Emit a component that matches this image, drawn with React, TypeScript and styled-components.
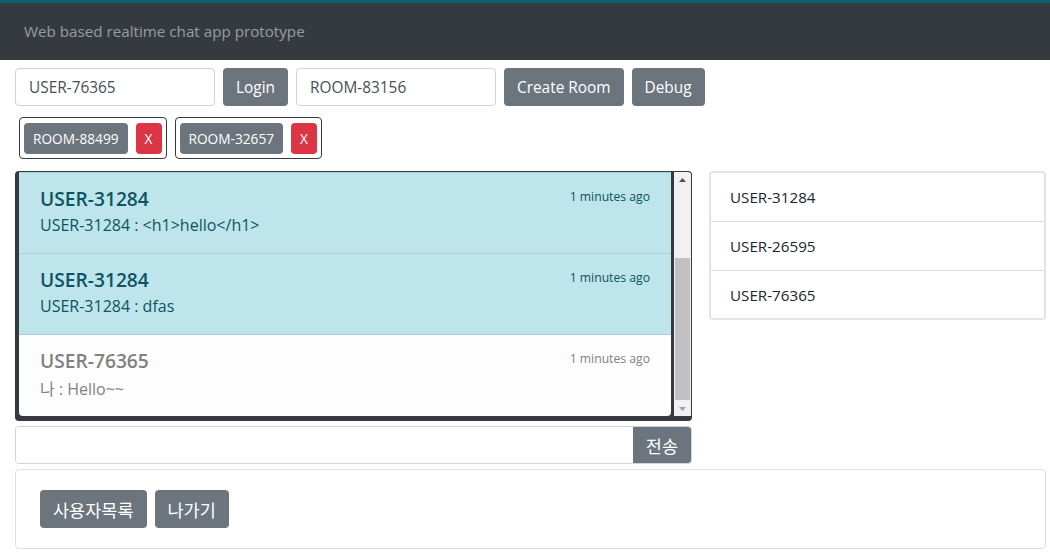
import React from "react";
import styled, { createGlobalStyle, css } from "styled-components";

const GlobalStyle = createGlobalStyle`
  html, body { margin: 0; padding: 0; background: #fff; }
  body {
    font-family: "Segoe UI", "Open Sans", "Noto Sans", "Noto Sans CJK KR", sans-serif;
    font-size: 16px;
    color: #212529;
  }
  * { box-sizing: border-box; }
`;

const Page = styled.div`
  width: 1050px;
  height: 552px;
  overflow: hidden;
`;

const Navbar = styled.header`
  height: 60px;
  background: #343a40;
  border-top: 3px solid #0b5f6e;
  display: flex;
  align-items: center;
  padding: 0 24px 1px;
  color: rgba(255, 255, 255, 0.5);
  font-size: 15.2px;
`;

const Content = styled.main`
  padding: 8px 4px 0 15px;
  display: flex;
  flex-direction: column;
`;

const Toolbar = styled.div`
  display: flex;
  gap: 8px;
  height: 38px;
`;

const TextInput = styled.input`
  width: 200px;
  height: 38px;
  border: 1px solid #ced4da;
  border-radius: 4px;
  padding: 6px 13px;
  font: inherit;
  font-size: 15.4px;
  color: #495057;
  outline: none;
`;

const Button = styled.button<{ $variant?: "secondary" | "danger"; $size?: "sm" | "md" }>`
  border: none;
  border-radius: 4px;
  font-family: inherit;
  color: #fff;
  background: ${(p) => (p.$variant === "danger" ? "#dc3545" : "#6c757d")};
  cursor: pointer;
  white-space: nowrap;
  display: inline-flex;
  align-items: center;
  justify-content: center;
  ${(p) =>
    p.$size === "sm"
      ? css`
          height: 31px;
          padding: 0 9px;
          font-size: 13.7px;
        `
      : css`
          height: 38px;
          padding: 0 13px;
          font-size: 15.4px;
        `}
`;

const KoreanButton = styled(Button)`
  font-size: 17.5px;
  font-family: "Noto Sans CJK KR", sans-serif;
`;

const RoomTags = styled.div`
  display: flex;
  gap: 8px;
  margin: 11px 0 0 4px;
  height: 42px;
`;

const RoomTag = styled.div`
  display: flex;
  align-items: center;
  gap: 8px;
  padding: 0 4px;
  border: 1px solid #343a40;
  border-radius: 4px;
`;

const MainGrid = styled.div`
  display: grid;
  grid-template-columns: 677px 337px;
  column-gap: 17px;
  margin-top: 12px;
  align-items: start;
`;

const ChatColumn = styled.div`
  display: flex;
  flex-direction: column;
  gap: 5px;
`;

const ChatFrame = styled.div`
  height: 250px;
  display: flex;
  gap: 3px;
  background: #343a40;
  border-style: solid;
  border-color: #343a40;
  border-width: 1px 1px 5px 4px;
  border-radius: 4px;
  overflow: hidden;
`;

const Viewport = styled.div`
  flex: 1;
  overflow: hidden;
  display: flex;
  flex-direction: column;
  justify-content: flex-end;
  border-radius: 0 0 4px 4px;
`;

const MessageList = styled.ul`
  list-style: none;
  margin: 0;
  padding: 0;
`;

const MessageItem = styled.li<{ $mine?: boolean }>`
  height: 81px;
  padding: 14px 21px 0 21px;
  background: ${(p) => (p.$mine ? "#fdfdfe" : "#bee5eb")};
  color: ${(p) => (p.$mine ? "#818182" : "#0c5460")};
  border-bottom: 1px solid ${(p) => (p.$mine ? "#dcdcdc" : "#abcdd3")};
  &:last-child { border-bottom: none; }
`;

const MessageHead = styled.div`
  display: flex;
  justify-content: space-between;
  align-items: flex-start;
`;

const Author = styled.h5`
  margin: 0;
  font-size: 19.2px;
  font-weight: 600;
  line-height: 1.3;
`;

const Time = styled.small`
  font-size: 12.2px;
  margin-top: 1px;
`;

const MessageText = styled.p`
  margin: 2px 0 0;
  font-size: 16px;
`;

const Scrollbar = styled.div`
  width: 17px;
  flex: none;
  background: #f1f1f1;
  display: flex;
  flex-direction: column;
`;

const ScrollArrow = styled.div`
  height: 15px;
  display: flex;
  align-items: center;
  justify-content: center;
  flex: none;
`;

const ScrollTrack = styled.div`
  flex: 1;
  display: flex;
  flex-direction: column;
  justify-content: flex-end;
  padding: 0 1px 1px;
`;

const ScrollThumb = styled.div`
  background: #c1c1c1;
  height: 142px;
`;

const SendBar = styled.div`
  display: flex;
  height: 38px;
  border: 1px solid #ced4da;
  border-radius: 4px;
  overflow: hidden;
`;

const SendInput = styled.input`
  flex: 1;
  border: none;
  outline: none;
  font: inherit;
  padding: 0 12px;
`;

const SendButton = styled(KoreanButton)`
  border-radius: 0;
  height: 100%;
  padding: 0 13px;
`;

const UserList = styled.ul`
  list-style: none;
  margin: 0;
  padding: 0;
  border: 2px solid #e4e4e4;
  border-radius: 4px;
`;

const UserItem = styled.li`
  height: 49px;
  display: flex;
  align-items: center;
  padding: 0 19px;
  font-size: 15.2px;
  color: #212529;
  border-bottom: 1px solid #dcdcdc;
  &:last-child { border-bottom: none; height: 47px; }
`;

const Card = styled.section`
  margin-top: 5px;
  height: 80px;
  border: 1px solid #dfdfdf;
  border-radius: 4px;
  display: flex;
  align-items: center;
  gap: 8px;
  padding: 0 24px;
`;

const messages = [
  { author: "USER-31284", text: "USER-31284 : hi", mine: false },
  { author: "USER-31284", text: "USER-31284 : <h1>hello</h1>", mine: false },
  { author: "USER-31284", text: "USER-31284 : dfas", mine: false },
  { author: "USER-76365", text: "나 : Hello~~", mine: true },
];

const users = ["USER-31284", "USER-26595", "USER-76365"];
const rooms = ["ROOM-88499", "ROOM-32657"];

const Arrow = ({ up, color }: { up?: boolean; color: string }) => (
  <svg width="7" height="4" viewBox="0 0 7 4">
    <path d={up ? "M0 4 L3.5 0 L7 4 Z" : "M0 0 L3.5 4 L7 0 Z"} fill={color} />
  </svg>
);

export default function App() {
  return (
    <Page>
      <GlobalStyle />
      <Navbar>Web based realtime chat app prototype</Navbar>
      <Content>
        <Toolbar>
          <TextInput defaultValue="USER-76365" />
          <Button>Login</Button>
          <TextInput defaultValue="ROOM-83156" />
          <Button>Create Room</Button>
          <Button>Debug</Button>
        </Toolbar>
        <RoomTags>
          {rooms.map((r) => (
            <RoomTag key={r}>
              <Button $size="sm">{r}</Button>
              <Button $size="sm" $variant="danger">X</Button>
            </RoomTag>
          ))}
        </RoomTags>
        <MainGrid>
          <ChatColumn>
            <ChatFrame>
              <Viewport>
                <MessageList>
                  {messages.map((m, i) => (
                    <MessageItem key={i} $mine={m.mine}>
                      <MessageHead>
                        <Author>{m.author}</Author>
                        <Time>1 minutes ago</Time>
                      </MessageHead>
                      <MessageText>{m.text}</MessageText>
                    </MessageItem>
                  ))}
                </MessageList>
              </Viewport>
              <Scrollbar>
                <ScrollArrow>
                  <Arrow up color="#505050" />
                </ScrollArrow>
                <ScrollTrack>
                  <ScrollThumb />
                </ScrollTrack>
                <ScrollArrow>
                  <Arrow color="#a3a3a3" />
                </ScrollArrow>
              </Scrollbar>
            </ChatFrame>
            <SendBar>
              <SendInput />
              <SendButton>전송</SendButton>
            </SendBar>
          </ChatColumn>
          <UserList>
            {users.map((u) => (
              <UserItem key={u}>{u}</UserItem>
            ))}
          </UserList>
        </MainGrid>
        <Card>
          <KoreanButton>사용자목록</KoreanButton>
          <KoreanButton>나가기</KoreanButton>
        </Card>
      </Content>
    </Page>
  );
}
